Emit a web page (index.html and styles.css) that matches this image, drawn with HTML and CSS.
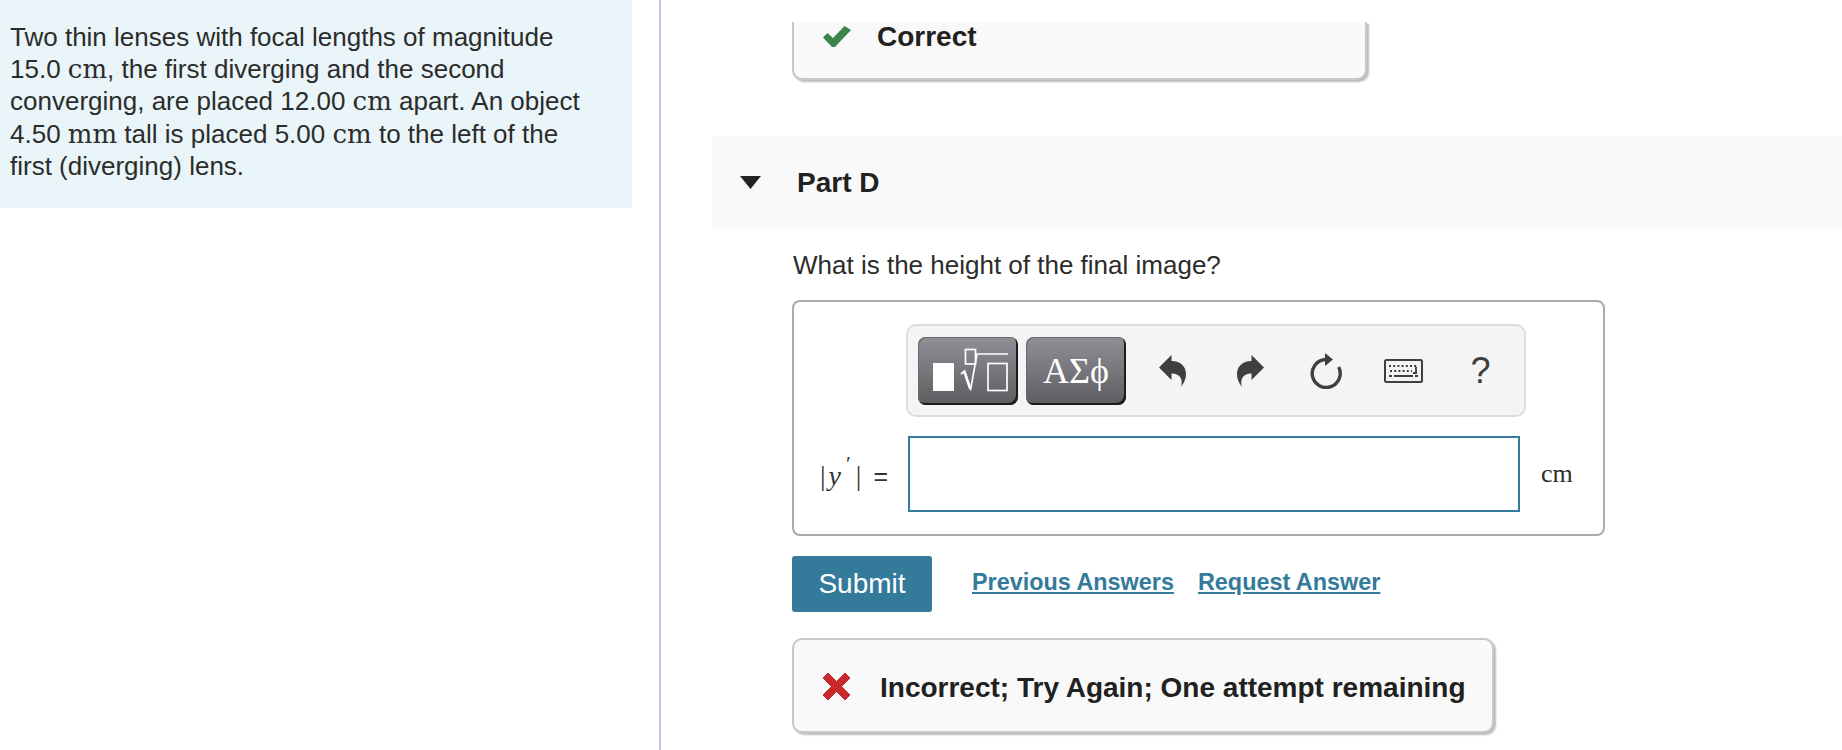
FILE: index.html
```html
<!DOCTYPE html>
<html lang="en">
<head>
<meta charset="utf-8">
<title>Part D</title>
<link rel="stylesheet" href="styles.css">
</head>
<body>
<div class="page">
  <aside class="left">
    <div class="intro">Two thin lenses with focal lengths of magnitude<br>15.0 <span class="cm">cm</span>, the first diverging and the second<br>converging, are placed 12.00 <span class="cm">cm</span> apart. An object<br>4.50 <span class="cm">mm</span> tall is placed 5.00 <span class="cm">cm</span> to the left of the<br>first (diverging) lens.</div>
  </aside>
  <main class="right">
    <div class="feedback correct">
      <svg class="ico-check" viewBox="0 0 28 21"><path d="M0 11.500 L4.500 7 L10 12 L21.500 0 L28 4 L12 21 L9 21 Z" fill="#3a8547"/></svg>
      <span>Correct</span>
    </div>
    <header class="part-head">
      <svg class="caret" viewBox="0 0 21 13"><path d="M0 0H21L10.500 13Z" fill="#222"/></svg>
      <h2>Part D</h2>
    </header>
    <div class="content">
      <p class="question">What is the height of the final image?</p>
      <section class="answer">
        <div class="toolbar">
          <button class="tool" type="button">
            <svg viewBox="0 0 100 68" width="100" height="68">
              <rect x="15" y="26" width="21" height="28" fill="#fff"/>
              <rect x="47.500" y="12.500" width="10" height="14.500" fill="none" stroke="#fff" stroke-width="1.700"/>
              <path d="M43 37 L46.500 34 L52.500 53 L59 17 H90" fill="none" stroke="#fff" stroke-width="1.700"/>
              <path d="M46.500 35 L52 51" fill="none" stroke="#fff" stroke-width="2.600"/>
              <rect x="70" y="26.500" width="19" height="27" fill="none" stroke="#fff" stroke-width="1.700"/>
            </svg>
          </button>
          <button class="tool greek" type="button">ΑΣϕ</button>
          <div class="cell"><svg class="ico" width="28" height="32" viewBox="0 0 28 32"><path d="M0 12.500 L12.500 0 V6 C22 6 27 12 27 19 C27 25 24 29 22 32 C24 25 22 18.500 12.500 18.500 V25 Z" fill="#3f3f3f"/></svg></div>
          <div class="cell"><svg class="ico" width="28" height="32" viewBox="0 0 28 32"><path d="M28 12.500 L15.500 0 V6 C6 6 1 12 1 19 C1 25 4 29 6 32 C4 25 6 18.500 15.500 18.500 V25 Z" fill="#3f3f3f"/></svg></div>
          <div class="cell"><svg class="ico" width="34" height="36" viewBox="0 0 34 36"><path d="M28.700 14.100 A14 14 0 1 1 15 6.500" fill="none" stroke="#3f3f3f" stroke-width="3.400"/><path d="M15 0 L23 6.500 L15 13 Z" fill="#3f3f3f"/></svg></div>
          <div class="cell"><svg class="ico" width="39" height="24" viewBox="0 0 39 24"><rect x="1" y="1" width="37" height="22" rx="1.500" fill="none" stroke="#3f3f3f" stroke-width="2"/><path d="M5 7h29M6 12h22" stroke="#3f3f3f" stroke-width="2" stroke-dasharray="2 2.200" fill="none"/><path d="M5 17h3M10 17h19M31 17h3M32 8v6h-3" stroke="#3f3f3f" stroke-width="1.800" fill="none"/></svg></div>
          <div class="cell help">?</div>
        </div>
        <div class="input-row">
          <div class="label"><span class="bar">|</span><i>y</i><span class="prime">′</span><span class="bar">|</span><span class="eq">=</span></div>
          <div class="field"></div>
          <span class="unit">cm</span>
        </div>
      </section>
      <div class="actions">
        <button class="submit" type="button">Submit</button>
        <a class="link first" href="#">Previous Answers</a>
        <a class="link" href="#">Request Answer</a>
      </div>
      <div class="feedback incorrect">
        <svg class="ico-x" viewBox="0 0 27 27"><path d="M5 0 L13.500 8.500 L22 0 L27 5 L18.500 13.500 L27 22 L22 27 L13.500 18.500 L5 27 L0 22 L8.500 13.500 L0 5 Z" fill="#c9282d" stroke="#c9282d" stroke-width="1" stroke-linejoin="round"/></svg>
        <span>Incorrect; Try Again; One attempt remaining</span>
      </div>
    </div>
  </main>
</div>
</body>
</html>
```
FILE: styles.css
```css
* { box-sizing: border-box; }
html, body { margin: 0; padding: 0; background: #fff; }
body { font-family: "Liberation Sans", Arial, sans-serif; color: #212121; }
.page { display: flex; width: 1842px; height: 750px; overflow: hidden; }

.left { width: 661px; flex: none; border-right: 2px solid #b9c9da; height: 750px; padding-right: 27px; }
.intro { background: #e9f5f8; height: 208px; padding: 21px 0 0 10px; font-size: 26px; line-height: 32.200px; color: #2c2c2c; white-space: nowrap; }
.cm { font-family: "DejaVu Serif", serif; font-size: 26px; line-height: 1; }

.right { flex: 1; padding: 22px 0 0 51px; min-width: 0; }
.content { padding-left: 81px; }

.feedback { background: #f9f9f9; border: 2px solid #c8c8c8; display: flex; align-items: center; font-weight: 700; font-size: 28px; color: #212121; }
.correct { margin-left: 80px; width: 575px; height: 58px; border-top: 0; border-radius: 0 0 10px 10px; box-shadow: 2px 2px 2px #bbb; padding: 0 0 27px 29px; }
.ico-check { width: 28px; height: 21px; margin-right: 26px; flex: none; }
.incorrect { margin: 26px 0 0 -1px; width: 702px; height: 95px; border-radius: 10px; box-shadow: 2px 2px 2px #bbb; padding: 2px 0 0 29px; }
.incorrect span { padding-top: 3px; }
.ico-x { width: 27px; height: 27px; margin-right: 30px; flex: none; }

.part-head { background: #f9f9f9; height: 92px; margin-top: 56px; display: flex; align-items: center; padding-left: 28px; }
.caret { width: 21px; height: 13px; margin-right: 36px; flex: none; }
.part-head h2 { margin: 2px 0 0; font-size: 28px; font-weight: 700; color: #212121; }

.question { margin: 21px 0 19px; font-size: 26px; line-height: 32px; color: #2c2c2c; }

.answer { width: 813px; height: 236px; margin-left: -1px; border: 2px solid #aaa; border-radius: 8px; padding: 22px 0 0 25px; }
.toolbar { display: flex; align-items: center; width: 620px; height: 93px; margin-left: 87px; background: #f4f4f4; border: 2px solid #ddd; border-radius: 10px; padding-left: 10px; }
.tool { width: 100px; height: 68px; padding: 0; margin: 0 8px 0 0; flex: none; background: linear-gradient(#908f97, #5d5d60); border: 0; border-radius: 8px; box-shadow: inset -2px -2px 0 #1c1c1c, inset 1px 1px 0 #6a6a6a; display: flex; align-items: center; justify-content: center; }
.greek { font-family: "Liberation Serif", serif; font-size: 36px; color: #fff; }
.cell { width: 77px; flex: none; display: flex; align-items: center; justify-content: center; }
.ico { display: block; }
.help { font-size: 36px; color: #3f3f3f; font-weight: 400; }

.input-row { display: flex; align-items: center; margin: 19px 0 0 1px; }
.label { width: 88px; flex: none; font-family: "Liberation Serif", serif; font-size: 28px; line-height: 32px; color: #333; display: flex; align-items: baseline; padding-top: 4px; }
.label i { font-style: italic; margin-left: 3px; }
.prime { font-size: 22px; line-height: 0; align-self: flex-start; padding-top: 4px; margin: 0 0 0 5px; }
.bar { font-weight: 400; }
.prime + .bar { margin-left: 5px; }
.eq { margin-left: 12px; font-family: "Liberation Sans", sans-serif; font-size: 25px; }
.field { width: 612px; height: 76px; border: 2px solid #337a9b; background: #fff; flex: none; }
.unit { font-family: "Liberation Serif", serif; font-size: 26px; margin-left: 21px; color: #2c2c2c; }

.actions { display: flex; align-items: center; margin: 20px 0 0 -1px; }
.submit { width: 140px; height: 56px; background: #337a9b; color: #fff; border: 0; border-radius: 3px; font: 400 28px "Liberation Sans", sans-serif; padding: 0; }
.link { font-size: 23.400px; font-weight: 700; color: #337a9b; text-decoration: underline; margin-left: 24px; transform: translateY(-2px); }
.link.first { margin-left: 40px; }
```
